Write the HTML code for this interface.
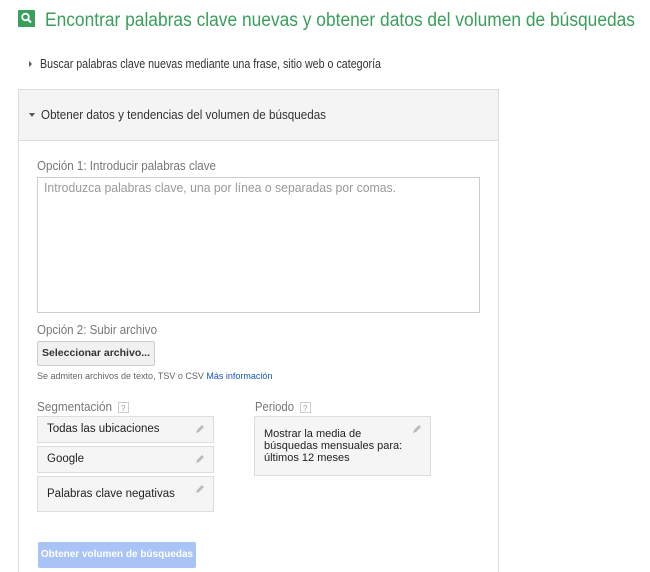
<!DOCTYPE html>
<html style="width:650px;height:572px;overflow:hidden"><head><meta charset="utf-8"><style>
html,body{margin:0;width:650px;height:572px;overflow:hidden}
body{background:#fff;position:relative;font-family:"Liberation Sans",Arial,sans-serif}
.a{position:absolute}
svg text{font-family:"Liberation Sans",Arial,sans-serif}
.box{position:absolute;background:#f5f5f5;border:1px solid #ddd;box-sizing:border-box;font-size:11.5px;color:#222}
.pen{position:absolute;right:8px;top:7px}
</style></head><body>
<div class="a" style="left:18px;top:10px;width:17px;height:17px;background:#3a9e5c;border-radius:1px">
<svg width="17" height="17"><circle cx="7.5" cy="7" r="3.3" fill="none" stroke="#fff" stroke-width="1.8"/><line x1="10" y1="9.5" x2="13" y2="12.5" stroke="#fff" stroke-width="2"/></svg></div>
<div class="a" style="left:18px;top:89px;width:481px;height:486px;border:1px solid #ddd;border-bottom:none;box-sizing:border-box"></div>
<div class="a" style="left:19px;top:90px;width:479px;height:50px;background:#f4f4f4;border-bottom:1px solid #ddd"></div>
<svg class="a" style="left:0;top:0" width="650" height="572">
<text x="45" y="26" font-size="19" fill="#3a9e5c" textLength="590" lengthAdjust="spacingAndGlyphs">Encontrar palabras clave nuevas y obtener datos del volumen de búsquedas</text>
<path d="M29 61 L32 64 L29 67Z" fill="#555"/>
<text x="40" y="68" font-size="12.5" fill="#333" textLength="341" lengthAdjust="spacingAndGlyphs">Buscar palabras clave nuevas mediante una frase, sitio web o categoría</text>
<path d="M29 113 L35 113 L32 117Z" fill="#555"/>
<text x="41" y="119" font-size="12.5" fill="#333" textLength="285" lengthAdjust="spacingAndGlyphs">Obtener datos y tendencias del volumen de búsquedas</text>
<text x="37" y="170" font-size="12.5" fill="#777" textLength="179" lengthAdjust="spacingAndGlyphs">Opción 1: Introducir palabras clave</text>
<rect x="37.5" y="177.5" width="442" height="135" fill="#fff" stroke="#ccc"/>
<text x="44" y="192" font-size="12.5" fill="#999" textLength="352" lengthAdjust="spacingAndGlyphs">Introduzca palabras clave, una por línea o separadas por comas.</text>
<text x="37" y="334" font-size="12.5" fill="#777" textLength="120" lengthAdjust="spacingAndGlyphs">Opción 2: Subir archivo</text>
<text x="37" y="411" font-size="12.5" fill="#777" textLength="75" lengthAdjust="spacingAndGlyphs">Segmentación</text>
<text x="255" y="411" font-size="12.5" fill="#777" textLength="39" lengthAdjust="spacingAndGlyphs">Periodo</text>
<rect x="118.5" y="402.5" width="10" height="10" fill="#fff" stroke="#ccc"/><text x="121" y="411" font-size="8" fill="#999">?</text>
<rect x="300.5" y="402.5" width="10" height="10" fill="#fff" stroke="#ccc"/><text x="303" y="411" font-size="8" fill="#999">?</text>
</svg>
<div class="a" style="left:37px;top:341px;width:118px;height:25px;background:#f1f1f1;border:1px solid #ccc;box-sizing:border-box;border-radius:2px;font-size:10.5px;font-weight:bold;color:#333;line-height:23px;text-align:center">Seleccionar archivo...</div>
<div class="a" style="left:37px;top:371px;font-size:9px;color:#666">Se admiten archivos de texto, TSV o CSV <span style="color:#1a55c0">Más información</span></div>
<div class="box" style="left:37px;top:416px;width:177px;height:27px;padding:6px 0 0 9px">Todas las ubicaciones<svg class="pen" width="10" height="10"><path d="M1 9 L2 6 L7 1 L9 3 L4 8Z" fill="#bbb"/></svg></div>
<div class="box" style="left:37px;top:446px;width:177px;height:27px;padding:6px 0 0 9px">Google<svg class="pen" width="10" height="10"><path d="M1 9 L2 6 L7 1 L9 3 L4 8Z" fill="#bbb"/></svg></div>
<div class="box" style="left:37px;top:476px;width:177px;height:36px;padding:11px 0 0 9px">Palabras clave negativas<svg class="pen" width="10" height="10"><path d="M1 9 L2 6 L7 1 L9 3 L4 8Z" fill="#bbb"/></svg></div>
<div class="box" style="left:254px;top:416px;width:177px;height:60px;padding:11px 0 0 9px;line-height:12px;font-size:11px">Mostrar la media de<br>búsquedas mensuales para:<br>últimos 12 meses<svg class="pen" width="10" height="10"><path d="M1 9 L2 6 L7 1 L9 3 L4 8Z" fill="#bbb"/></svg></div>
<div class="a" style="left:38px;top:542px;width:158px;height:26px;background:#a9c3f7;border-radius:2px;color:#fff;font-size:10px;font-weight:bold;line-height:26px;text-align:center">Obtener volumen de búsquedas</div>
</body></html>
